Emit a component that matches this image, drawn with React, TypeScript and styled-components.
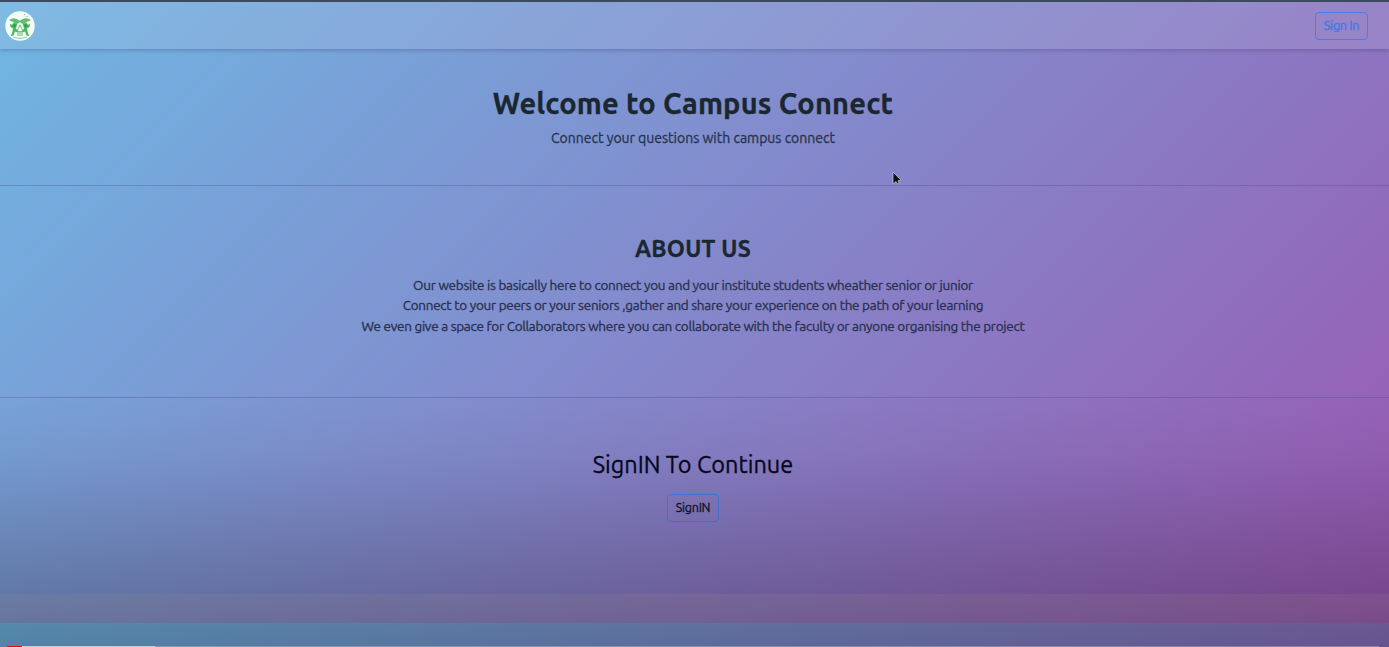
import React from 'react';
import styled, { createGlobalStyle } from 'styled-components';

const GlobalStyle = createGlobalStyle`
  * { box-sizing: border-box; }
  html, body { margin: 0; padding: 0; }
  body {
    font-family: Ubuntu, "Noto Sans", sans-serif;
    background: #71b7e6;
    overflow: hidden;
  }
`;

const Page = styled.div`
  position: relative;
  display: flex;
  flex-direction: column;
  height: 647px;
  border-top: 2px solid #3c4a60;
  overflow: hidden;
`;

const Site = styled.div`
  display: flex;
  flex-direction: column;
  height: 621px;
  flex: none;
  background: linear-gradient(135deg, #6fb6e3, #9a58b3);
`;

const NextTile = styled.div`
  height: 24px;
  flex: none;
  background: linear-gradient(135deg, #71b7e6 0%, #8e74c4 100%);
`;

const Navbar = styled.header`
  display: flex;
  align-items: center;
  justify-content: space-between;
  flex: none;
  height: 47px;
  padding: 0 21px 0 5px;
  background: rgba(210, 210, 228, 0.16);
  box-shadow: 0 1px 4px rgba(40, 40, 80, 0.3);
`;

const Logo = styled.svg`
  display: block;
  width: 30px;
  height: 30px;
`;

const Button = styled.button<{ $tone: string; $width: number }>`
  display: flex;
  align-items: center;
  justify-content: center;
  width: ${(p) => p.$width}px;
  height: 28px;
  padding: 0 0 2px;
  border: 1px solid #467ee8;
  border-radius: 4px;
  background: transparent;
  color: ${(p) => p.$tone};
  font-family: inherit;
  font-size: 12.5px;
  letter-spacing: -0.25px;
  -webkit-text-stroke: 0.3px currentColor;
  white-space: nowrap;
`;

const Section = styled.section<{ $height: number; $top: number; $divided?: boolean }>`
  display: flex;
  flex-direction: column;
  align-items: center;
  flex: none;
  height: ${(p) => p.$height}px;
  padding: ${(p) => p.$top}px 3px 0 0;
  border-bottom: ${(p) => (p.$divided ? '1px solid rgba(80, 75, 150, 0.36)' : 'none')};
  text-align: center;
  color: #1b2730;
`;

const Title = styled.h1`
  margin: 0;
  font-size: 29px;
  line-height: 36px;
  font-weight: 700;
  letter-spacing: 0.2px;
  -webkit-text-stroke: 0.3px currentColor;
  white-space: nowrap;
`;

const Subtitle = styled.p`
  margin: 7px 0 0;
  font-size: 14px;
  line-height: 20px;
  color: #28344f;
  -webkit-text-stroke: 0.3px currentColor;
`;

const Heading = styled.h2`
  margin: 0;
  font-size: 23px;
  line-height: 31px;
  font-weight: 700;
  letter-spacing: 0.25px;
  -webkit-text-stroke: 0.3px currentColor;
`;

const Copy = styled.div`
  margin-top: 11px;
  color: #28304d;
`;

const Line = styled.p`
  margin: 0;
  font-size: 13.5px;
  line-height: 20.4px;
  letter-spacing: -0.27px;
  -webkit-text-stroke: 0.3px currentColor;
  white-space: nowrap;
`;

const Prompt = styled.p`
  margin: 0 0 14px;
  font-size: 23.5px;
  line-height: 32px;
  color: #06071c;
  -webkit-text-stroke: 0.3px currentColor;
`;

const Footer = styled.footer`
  height: 29px;
  margin-top: auto;
  background: rgba(205, 180, 190, 0.15);
`;

const PlayerShade = styled.div`
  position: absolute;
  inset: auto 0 0;
  height: 257px;
  background: linear-gradient(to bottom, transparent, rgba(0, 0, 0, 0.04) 25%, rgba(0, 0, 0, 0.12) 50%, rgba(0, 0, 0, 0.21) 78%, rgba(0, 0, 0, 0.28));
  pointer-events: none;
`;

const Progress = styled.div`
  position: absolute;
  left: 7px;
  right: 10px;
  bottom: 0;
  height: 1px;
  background: linear-gradient(to right, #f00 15px, rgba(255, 255, 255, 0.6) 15px 148px, rgba(255, 255, 255, 0.25) 148px);
`;

const Pointer = styled.svg`
  position: absolute;
  left: 892px;
  top: 169px;
  width: 10px;
  height: 14px;
`;

const CampusLogo = () => (
  <Logo viewBox="0 0 30 30">
    <circle cx="15" cy="15" r="14.7" fill="#f3fbf6" />
    <path d="M4 9.2Q9 4.8 14.7 9.8Q20.5 4.8 26 9.2Q21.5 10.2 18.2 13.3L14.9 11.2L11.5 13.3Q8.2 10.2 4 9.2Z" fill="#62bb72" />
    <path d="M5 13L7 13.8L8.8 11.5L12.3 13.2L10.8 17.8L13.2 19.8L11.8 21.2L10 20.4L8.5 24.5L5.6 25L7.3 21.5L8 17.5L5.5 16Z" fill="#4bb75f" />
    <path d="M25 13L23 13.8L21.2 11.5L17.7 13.2L19.2 17.8L16.8 19.8L18.2 21.2L20 20.4L21.5 24.5L24.4 25L22.7 21.5L22 17.5L24.5 16Z" fill="#4bb75f" />
    <path d="M15 13.8L11.8 20.6H18.2L15 13.8ZM13 21V25M15 21V25M17 21V25" fill="none" stroke="#55b967" strokeWidth="0.9" />
    <circle cx="9.4" cy="14.8" r="1.3" fill="#259c42" />
    <circle cx="20.6" cy="14.8" r="1.3" fill="#259c42" />
    <circle cx="19.5" cy="3.6" r="0.7" fill="#79c887" />
    <circle cx="22" cy="5.5" r="0.7" fill="#79c887" />
    <path d="M8 26.3Q15 28.4 22 26.3" fill="none" stroke="#9fd3a6" strokeWidth="1.2" />
  </Logo>
);

export default function App() {
  return (
    <>
      <GlobalStyle />
      <Page>
        <Site>
          <Navbar>
            <CampusLogo />
            <Button $tone="#3b78e6" $width={53}>Sign In</Button>
          </Navbar>
          <Section $height={137} $top={36} $divided>
            <Title>Welcome to Campus Connect</Title>
            <Subtitle>Connect your questions with campus connect</Subtitle>
          </Section>
          <Section $height={212} $top={47} $divided>
            <Heading>ABOUT US</Heading>
            <Copy>
              <Line>Our website is basically here to connect you and your institute students wheather senior or junior</Line>
              <Line>Connect to your peers or your seniors ,gather and share your experience on the path of your learning</Line>
              <Line>We even give a space for Collaborators where you can collaborate with the faculty or anyone organising the project</Line>
            </Copy>
          </Section>
          <Section $height={196} $top={50}>
            <Prompt>SignIN To Continue</Prompt>
            <Button $tone="#13122b" $width={52}>SignIN</Button>
          </Section>
          <Footer />
        </Site>
        <NextTile />
        <PlayerShade />
        <Progress />
        <Pointer viewBox="0 0 10 14">
          <path d="M1 1V13L4 10.5L5.5 13L7.2 12.2L6 9.8L9 9.2Z" fill="#111" stroke="#c9c9dc" strokeWidth="0.7" />
        </Pointer>
      </Page>
    </>
  );
}
